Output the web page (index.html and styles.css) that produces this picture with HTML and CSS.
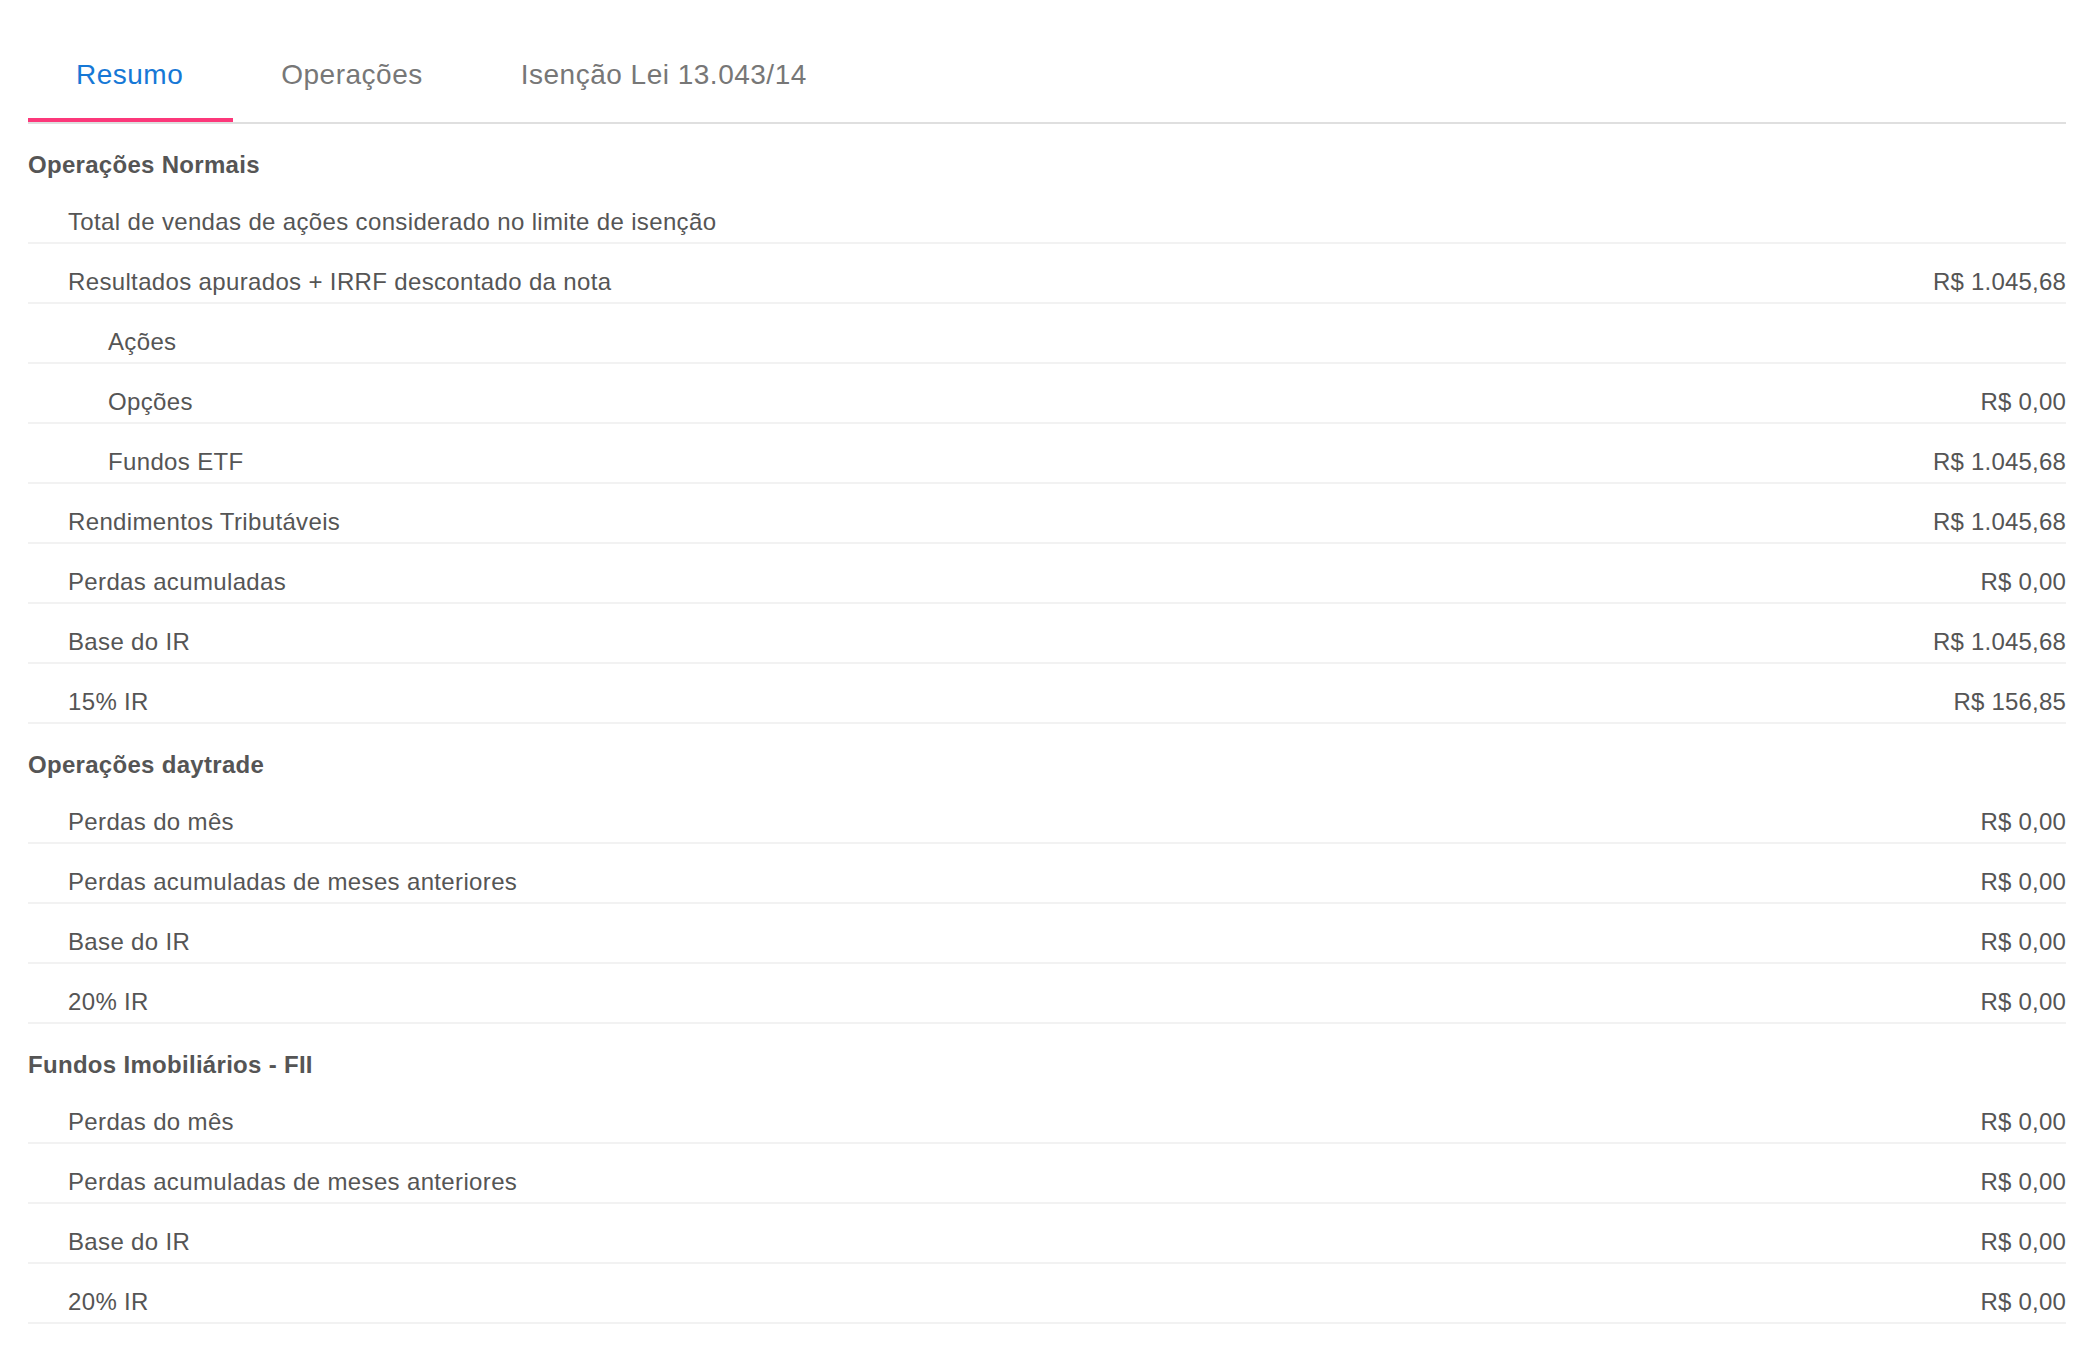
FILE: index.html
```html
<!DOCTYPE html>
<html lang="pt-BR">
<head>
<meta charset="utf-8">
<title>Resumo</title>
<link rel="stylesheet" href="styles.css">
</head>
<body>
<div class="page">
  <nav class="tabs">
    <div class="tab active">Resumo</div>
    <div class="tab">Operações</div>
    <div class="tab">Isenção Lei 13.043/14</div>
  </nav>

  <section class="group">
    <h2 class="group-title">Operações Normais</h2>
    <div class="row"><span class="label">Total de vendas de ações considerado no limite de isenção</span><span class="value"></span></div>
    <div class="row"><span class="label">Resultados apurados + IRRF descontado da nota</span><span class="value">R$ 1.045,68</span></div>
    <div class="row sub"><span class="label">Ações</span><span class="value"></span></div>
    <div class="row sub"><span class="label">Opções</span><span class="value">R$ 0,00</span></div>
    <div class="row sub"><span class="label">Fundos ETF</span><span class="value">R$ 1.045,68</span></div>
    <div class="row"><span class="label">Rendimentos Tributáveis</span><span class="value">R$ 1.045,68</span></div>
    <div class="row"><span class="label">Perdas acumuladas</span><span class="value">R$ 0,00</span></div>
    <div class="row"><span class="label">Base do IR</span><span class="value">R$ 1.045,68</span></div>
    <div class="row"><span class="label">15% IR</span><span class="value">R$ 156,85</span></div>
  </section>

  <section class="group">
    <h2 class="group-title">Operações daytrade</h2>
    <div class="row"><span class="label">Perdas do mês</span><span class="value">R$ 0,00</span></div>
    <div class="row"><span class="label">Perdas acumuladas de meses anteriores</span><span class="value">R$ 0,00</span></div>
    <div class="row"><span class="label">Base do IR</span><span class="value">R$ 0,00</span></div>
    <div class="row"><span class="label">20% IR</span><span class="value">R$ 0,00</span></div>
  </section>

  <section class="group">
    <h2 class="group-title">Fundos Imobiliários - FII</h2>
    <div class="row"><span class="label">Perdas do mês</span><span class="value">R$ 0,00</span></div>
    <div class="row"><span class="label">Perdas acumuladas de meses anteriores</span><span class="value">R$ 0,00</span></div>
    <div class="row"><span class="label">Base do IR</span><span class="value">R$ 0,00</span></div>
    <div class="row"><span class="label">20% IR</span><span class="value">R$ 0,00</span></div>
  </section>
</div>
</body>
</html>
```
FILE: styles.css
```css
html, body {
  margin: 0;
  padding: 0;
  background: #ffffff;
}

body {
  font-family: "Liberation Sans", Arial, Helvetica, sans-serif;
  color: #555555;
}

.page {
  padding: 30px 32px 0 28px;
}

.tabs {
  display: flex;
  border-bottom: 2px solid #dfdfdf;
}

.tab {
  padding: 28px 50px 26px 48px;
  font-size: 28px;
  line-height: 34px;
  letter-spacing: 0.5px;
  color: #777777;
  border-bottom: 4px solid transparent;
}

.tab.active {
  color: #1678d6;
  border-bottom-color: #fc387a;
}

.group-title {
  margin: 0;
  padding: 27px 0 5px;
  font-size: 24px;
  line-height: 28px;
  font-weight: bold;
  letter-spacing: 0.3px;
  color: #555555;
}

.row {
  display: flex;
  justify-content: space-between;
  align-items: baseline;
  padding: 24px 0 6px 40px;
  font-size: 24px;
  line-height: 28px;
  letter-spacing: 0.35px;
  color: #555555;
  border-bottom: 2px solid #f2f2f2;
}

.row.sub {
  padding-left: 80px;
}

.value {
  text-align: right;
  letter-spacing: 0.2px;
}
```
